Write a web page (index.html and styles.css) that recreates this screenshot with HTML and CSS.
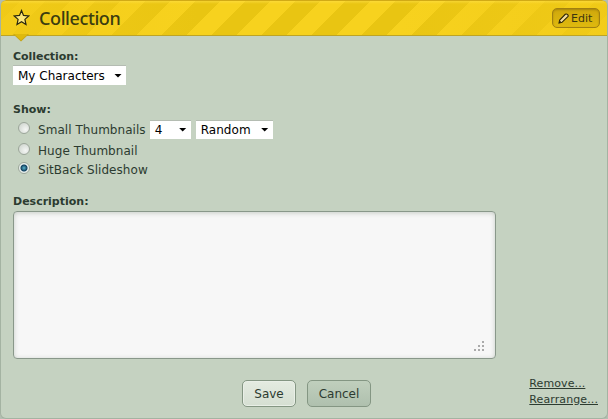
FILE: index.html
```html
<!DOCTYPE html>
<html lang="en">
<head>
<meta charset="utf-8">
<title>Collection</title>
<link rel="stylesheet" href="styles.css">
</head>
<body>
<form class="panel">
  <header class="bar">
    <svg class="star" width="18" height="18" viewBox="0 0 18 18"><path d="M8.5 1.5 10.5 6.4 15.8 7 11.9 10.4 13 15.4 8.5 12.7 4 15.4 5.1 10.4 1.2 7 6.5 6.4Z" fill="#fbe67a" stroke="#29270f" stroke-width="1.2"/></svg>
    <h1 class="title">Collection</h1>
    <button type="button" class="edit">
      <svg width="11" height="11" viewBox="0 0 11 11"><path d="M1 10 1.7 7 7.3 1.3Q8.5.5 9.6 1.6T9.8 3.7L4 9.3Z" fill="#f5dfa0" stroke="#2b2407" stroke-width="1.1"/><path d="M1 10 2 7.8 3.2 9Z" fill="#2b2407"/></svg>
      <span class="edit-text">Edit</span>
    </button>
    <svg class="pointer" width="16" height="8" viewBox="0 0 16 8"><path d="M0 0H16L8 7.5Z" fill="#c6a516"/><path d="M1 0H15L8 6.3Z" fill="#deb90c"/></svg>
  </header>
  <main class="content">
    <div class="label label-collection">Collection:</div>
    <div class="select select-collection"><span>My Characters</span><i class="arrow"></i></div>
    <div class="label label-show">Show:</div>
    <div class="option option-small"><i class="radio"></i><span class="option-text">Small Thumbnails</span>
      <div class="select select-count"><span>4</span><i class="arrow"></i></div>
      <div class="select select-order"><span>Random</span><i class="arrow"></i></div>
    </div>
    <div class="option option-huge"><i class="radio"></i><span class="option-text">Huge Thumbnail</span></div>
    <div class="option option-slide"><i class="radio checked"></i><span class="option-text">SitBack Slideshow</span></div>
    <div class="label label-description">Description:</div>
    <div class="textarea"><svg width="11" height="10" viewBox="0 0 11 10" fill="#aaa"><path d="M8 0h2v2H8zM4 4h2v2H4zM8 4h2v2H8zM0 8h2v2H0zM4 8h2v2H4zM8 8h2v2H8z"/></svg></div>
  </main>
  <footer class="footer">
    <button type="button" class="button save">Save</button>
    <button type="button" class="button cancel">Cancel</button>
    <nav class="links"><a>Remove...</a><a>Rearrange...</a></nav>
  </footer>
</form>
</body>
</html>
```
FILE: styles.css
```css
* { box-sizing: border-box; }
body { margin: 0; background: #b3beb1; font: 12px/16px "DejaVu Sans", sans-serif; color: #2c3b30; }
button { font: inherit; color: inherit; padding: 0; }
.panel { width: 608px; height: 419px; display: flex; flex-direction: column; background: #c5d2c1; border: 1px solid #a4b3a2; border-top: 0; border-radius: 6px; overflow: hidden; }
.bar { position: relative; height: 36px; flex: none; display: flex; align-items: center; padding: 0 8px 0 13px; border-top: 1px solid #d1aa15; border-bottom: 1px solid #bda425; border-radius: 6px 6px 0 0; margin: 0 -1px;
  background: linear-gradient(#ffe04b88, #ffe04b00 3px), linear-gradient(90deg, #f2cb19d0, #f2cb1900 200px, #f2cb1900 400px, #f2cb19d0), linear-gradient(135deg, #f7d21e 25%, #e9c512 25%, #e9c512 50%, #f7d21e 50%, #f7d21e 75%, #e9c512 75%) 21px 0 / 50px 50px; }
.star { flex: none; }
.title { margin: -1px 0 0 8px; font: 500 18px/24px "Noto Sans", sans-serif; color: #3b3d10; letter-spacing: -0.4px; }
.edit { margin-left: auto; width: 48px; height: 20px; display: flex; align-items: center; gap: 2px; padding-left: 5px; border: 1px solid #a18011; border-radius: 5px; background: linear-gradient(#cfa80d, #dfb90e); box-shadow: inset 0 1px 2px #a8850c; color: #3b3511; font-size: 11px; }
.edit-text { padding-top: 1px; }
.pointer { position: absolute; left: 13px; top: 33px; }
.content { padding-left: 12px; display: flex; flex-direction: column; align-items: flex-start; }
.label { font-weight: bold; font-size: 11px; line-height: 14px; }
.label-collection { margin-top: 14px; letter-spacing: -0.05px; }
.select { height: 19px; display: flex; align-items: center; justify-content: space-between; padding: 0 4px 0 5px; background: #fff; border-top: 1px solid #b4bcb2; color: #000; font-size: 12px; }
.select-collection { width: 113px; height: 20px; margin-top: 1px; }
.arrow { width: 8px; height: 4px; background: #000; clip-path: polygon(0 0, 100% 0, 50% 100%); }
.label-show { margin-top: 18px; }
.option { display: flex; align-items: center; height: 20px; letter-spacing: 0.05px; }
.option-small { margin-top: 2px; }
.option-text { padding-top: 1px; }
.radio { width: 12px; height: 12px; margin: -2px 8px 0 5px; border: 1px solid #9ca69a; border-radius: 50%; background: radial-gradient(circle at 65% 65%, #f4f6f4, #c9d0c8); }
.checked { background: radial-gradient(circle, #5db8d0 0, #10405f 3px, #e8efec 4px); }
.option-huge { margin-top: 1px; }
.option-slide { height: 18px; }
.select-count { width: 41px; margin-left: 4px; }
.select-order { width: 77px; margin-left: 5px; }
.label-description { margin-top: 17px; }
.textarea { width: 483px; height: 148px; margin-top: 2px; background: #f7f7f7; border: 1px solid #89988a; border-radius: 4px; box-shadow: inset 0 1px 5px #c6ccc5; display: flex; align-items: flex-end; justify-content: flex-end; padding: 0 10px 7px; }
.footer { display: flex; margin-top: 17px; padding-left: 241px; align-items: flex-start; }
.button { height: 27px; margin-top: 4px; padding-top: 1px; border: 1px solid #849683; border-radius: 5px; }
.save { width: 54px; background: linear-gradient(#e4ebe1, #d5dfd2); box-shadow: inset 0 0 0 1px #e9efe7; }
.cancel { width: 64px; margin-left: 11px; background: linear-gradient(#c0cfbd, #afc0ae); }
.links { margin: 0 9px 0 auto; display: flex; flex-direction: column; font-size: 11px; letter-spacing: 0.1px; text-decoration: underline; }
```
